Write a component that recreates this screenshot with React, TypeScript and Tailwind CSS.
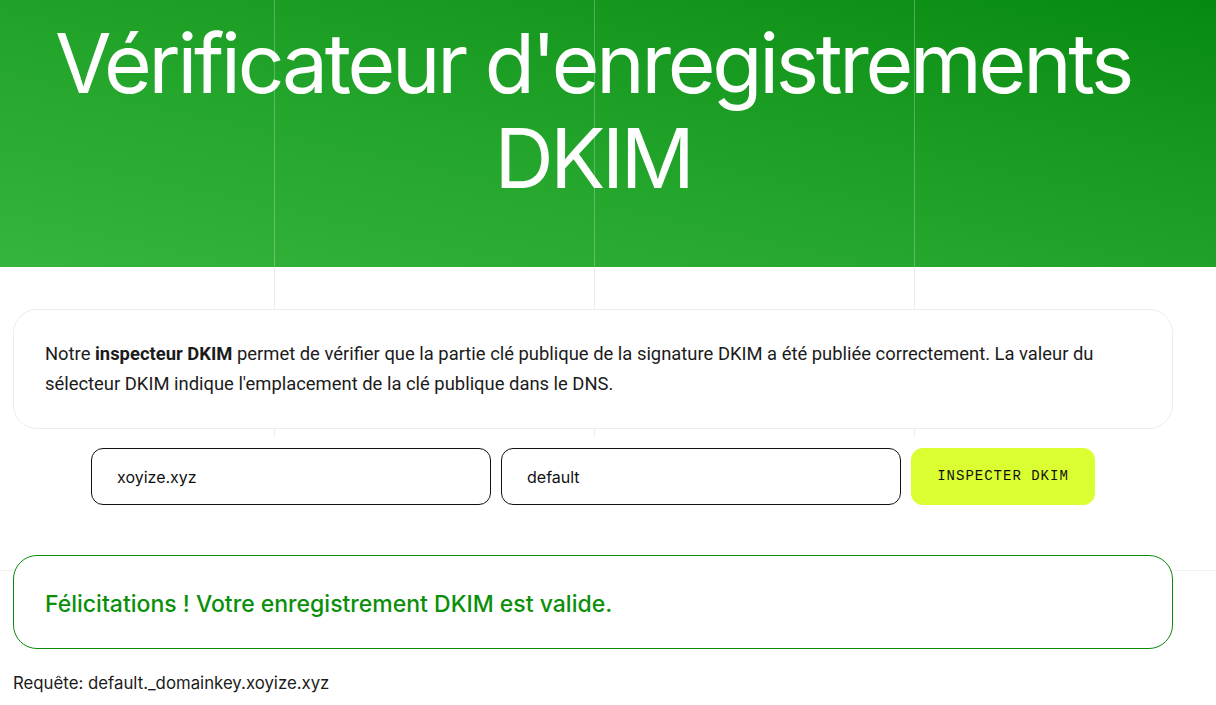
import { useState } from 'react'

const geo = "font-['Inter','Noto_Sans',sans-serif]"

// decorative vertical rules, 320px apart
const Rules = (props: { tone: string }) => (
    <div className="absolute inset-0 flex pl-[274px] pointer-events-none">
        {[0, 1, 2].map((i) => (
            <div key={i} className={`w-[320px] shrink-0 border-l ${props.tone}`} />
        ))}
    </div>
)

export default function App() {
    const [domain, setDomain] = useState('xoyize.xyz')
    const [selector, setSelector] = useState('default')

    return (
        <div className="relative min-h-[705px] bg-white overflow-hidden">
            <div className="absolute inset-x-0 top-0 h-[437px]">
                <Rules tone="border-[#ececec]" />
            </div>
            <div className="absolute inset-x-0 top-[570px] border-t border-[#f0f0f0]" />

            <header className="relative h-[267px] bg-gradient-to-tr from-[#36b43d] via-[#20a228] to-[#058a0f]">
                <Rules tone="border-white/25" />
                <h1 className={`relative w-[1186px] pt-[16px] text-center text-white font-normal text-[82px] leading-[95px] tracking-[-0.04em] ${geo}`}>
                    Vérificateur d'enregistrements DKIM
                </h1>
            </header>

            <main className="relative ml-[13px] w-[1160px] pt-[42px] flex flex-col">
                <div className="rounded-[24px] border border-[#ececec] bg-white px-[31px] py-[29px] font-['Roboto',sans-serif] text-[18.4px] leading-[30px] text-[#1b1b1b]">
                    Notre <b className="font-bold">inspecteur DKIM</b> permet de vérifier que la partie clé publique de la signature DKIM a été publiée correctement. La valeur du sélecteur DKIM indique l'emplacement de la clé publique dans le DNS.
                </div>

                <form className="mt-[19px] flex justify-center gap-[10px]" onSubmit={(e) => e.preventDefault()}>
                    <input
                        value={domain}
                        onChange={(e) => setDomain(e.target.value)}
                        className={`h-[57px] w-[400px] rounded-[12px] border border-[#111] bg-white px-[25px] text-[16px] text-[#111] outline-none ${geo}`}
                    />
                    <input
                        value={selector}
                        onChange={(e) => setSelector(e.target.value)}
                        className={`h-[57px] w-[400px] rounded-[12px] border border-[#111] bg-white px-[25px] text-[16px] text-[#111] outline-none ${geo}`}
                    />
                    <button className="h-[57px] w-[184px] rounded-[12px] bg-[#d9ff33] font-['Liberation_Mono',monospace] text-[14px] tracking-[1px] text-[#111]">
                        INSPECTER DKIM
                    </button>
                </form>

                <div className={`mt-[50px] flex h-[94px] items-center rounded-[24px] border border-[#0a8a0a] bg-white px-[31px] pt-[4px] text-[23px] font-medium text-[#0a8f0a] ${geo}`}>
                    Félicitations ! Votre enregistrement DKIM est valide.
                </div>

                <p className={`mt-[22px] text-[16.8px] text-[#1b1b1b] ${geo}`}>
                    Requête: default._domainkey.xoyize.xyz
                </p>
            </main>
        </div>
    )
}
